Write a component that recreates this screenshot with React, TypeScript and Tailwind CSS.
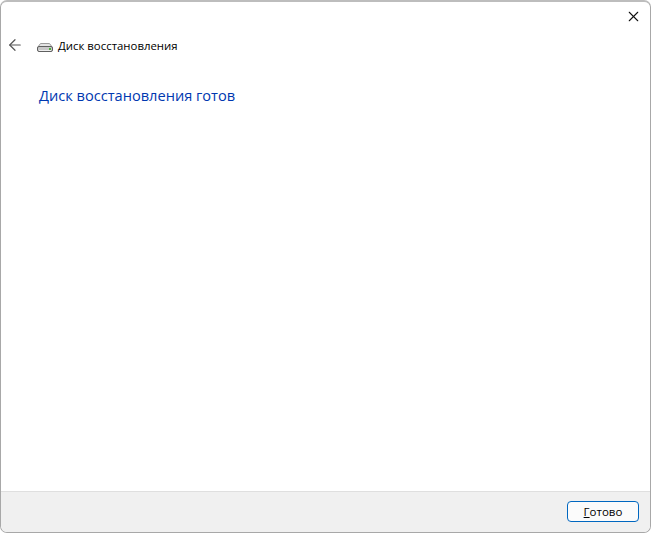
import { ArrowLeft, X } from 'lucide-react';

function DriveIcon() {
  return (
    <svg width="16" height="16" viewBox="0 0 16 16" className="shrink-0">
      <path d="M3.5 5.5 L12.5 5.5 L15.5 9.5 L0.5 9.5 Z" fill="#e4e4e4" stroke="#9a9a9a" strokeWidth="1" />
      <rect x="0.5" y="8.5" width="15" height="5" rx="1.5" fill="#c8c8c8" stroke="#606060" strokeWidth="1" />
      <rect x="2" y="12" width="12" height="1" fill="#efefef" />
      <rect x="12" y="10" width="2" height="2" fill="#4cae3c" />
    </svg>
  );
}

export default function App() {
  return (
    <div className="w-[651px] h-[533px] flex flex-col bg-white overflow-hidden rounded-[7px] border border-[#a8a8a8] border-t-2 border-t-[#bdbdbd] font-['Open_Sans','Noto_Sans',sans-serif]">
      <div className="flex justify-end h-[28px] pt-[6px] pr-[8px] shrink-0">
        <X size={17} strokeWidth={1.5} className="text-[#111111]" />
      </div>
      <div className="flex items-center h-[30px] pl-[5px] shrink-0">
        <ArrowLeft size={18} strokeWidth={1.6} className="text-[#555555]" />
        <div className="ml-[13px] mt-[2px]">
          <DriveIcon />
        </div>
        <span className="ml-[5px] mt-[1px] text-[11.4px] leading-none text-black">Диск восстановления</span>
      </div>
      <div className="flex-1 pl-[38px] pt-[24px]">
        <h1 className="text-[14.6px] leading-[22px] font-normal text-[#0038b0]">Диск восстановления готов</h1>
      </div>
      <div className="flex justify-end items-center h-[41px] pr-[11px] pb-[1px] bg-[#f0f0f0] border-t border-[#dfdfdf] shrink-0">
        <button className="w-[72px] h-[21px] flex items-center justify-center rounded-[4px] bg-[#fbfbfb] border-[1.5px] border-[#0067c0] text-[11.5px] leading-none text-black">
          <span><span className="underline">Г</span>отово</span>
        </button>
      </div>
    </div>
  );
}
